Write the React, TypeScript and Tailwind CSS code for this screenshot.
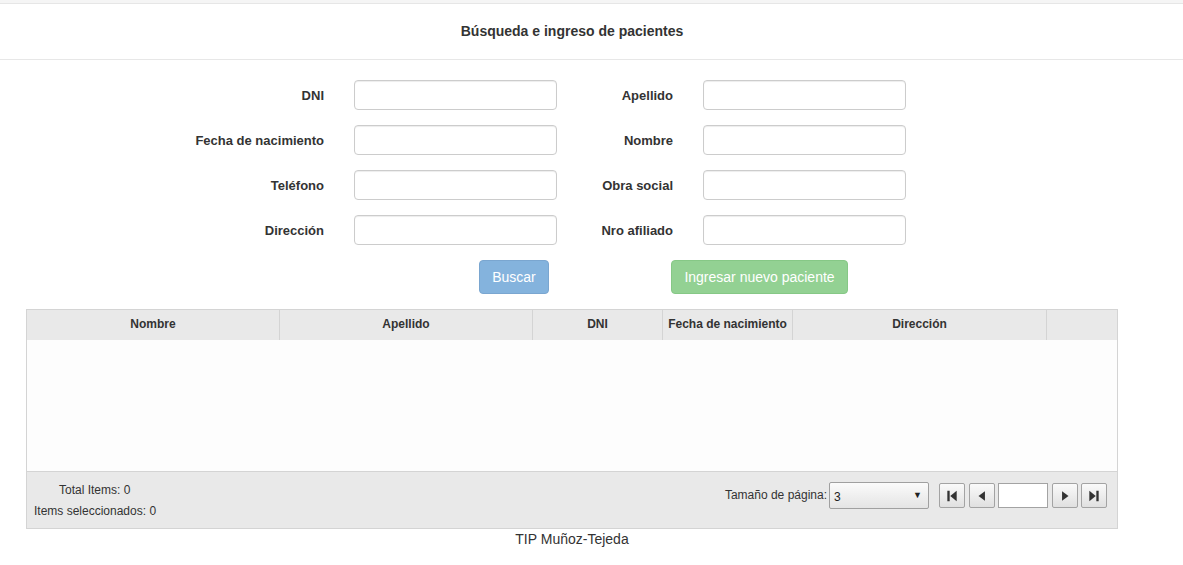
import React from "react";

const font = { fontFamily: '"Liberation Sans", Arial, sans-serif' };

function Field({ label, labelWidth }: { label: string; labelWidth: string }) {
    return (
        <div className="flex items-center">
            <label className={`${labelWidth} mt-[2px] text-right text-[13px] font-bold text-[#333]`}>{label}</label>
            <input
                type="text"
                className="ml-[30px] h-[30px] w-[203px] rounded-[4px] border border-[#ccc] bg-white shadow-[inset_0_1px_1px_rgba(0,0,0,0.075)] outline-none"
            />
        </div>
    );
}

function PagerButton({ children }: { children: React.ReactNode }) {
    return (
        <button className="flex h-[25px] w-[26px] items-center justify-center rounded-[2px] border border-[#a3a3a3] bg-gradient-to-b from-[#fafafa] to-[#e0e0e0] text-[#333]">
            {children}
        </button>
    );
}

const rows: [string, string][] = [
    ["DNI", "Apellido"],
    ["Fecha de nacimiento", "Nombre"],
    ["Teléfono", "Obra social"],
    ["Dirección", "Nro afiliado"],
];

const columns = [
    { name: "Nombre", w: "w-[253px]" },
    { name: "Apellido", w: "w-[253px]" },
    { name: "DNI", w: "w-[130px]" },
    { name: "Fecha de nacimiento", w: "w-[130px]" },
    { name: "Dirección", w: "w-[254px]" },
    { name: "", w: "flex-1" },
];

export default function App() {
    return (
        <div className="min-h-screen bg-white text-[#333]" style={font}>
            {/* top strip */}
            <div className="h-[4px] border-b border-[#e6e6e6] bg-[#f5f5f5]" />

            {/* title bar */}
            <div className="h-[56px] border-b border-[#e7e7e7]">
                <div className="flex h-full w-[1144px] items-center justify-center pb-[1px]">
                    <h1 className="text-[14px] font-bold text-[#333]">Búsqueda e ingreso de pacientes</h1>
                </div>
            </div>

            <div className="w-[1144px]">
                {/* search form */}
                <div className="mt-[20px] flex flex-col gap-[15px] pl-[164px]">
                    {rows.map(([a, b]) => (
                        <div key={a} className="flex">
                            <Field label={a} labelWidth="w-[160px]" />
                            <Field label={b} labelWidth="w-[116px]" />
                        </div>
                    ))}
                </div>

                <div className="mt-[15px] flex h-[34px]">
                    <button className="ml-[479px] h-[34px] w-[70px] rounded-[4px] border border-[#7aa6d0] bg-[#84b3dd] text-[14px] text-white">
                        Buscar
                    </button>
                    <button className="ml-[122px] h-[34px] w-[177px] rounded-[4px] border border-[#86c886] bg-[#93d193] text-[14px] text-white">
                        Ingresar nuevo paciente
                    </button>
                </div>

                {/* grid */}
                <div className="ml-[26px] mt-[15px] w-[1092px] border border-[#d4d4d4]">
                    <div className="flex h-[30px] bg-[#e9e9e9]">
                        {columns.map((c, i) => (
                            <div
                                key={i}
                                className={`${c.w} flex items-center justify-center pb-[2px] text-[12px] font-bold text-[#333] ${i < columns.length - 1 ? "border-r border-[#d4d4d4]" : ""}`}
                            >
                                {c.name}
                            </div>
                        ))}
                    </div>
                    <div className="h-[131px] bg-[#fdfdfd]" />
                    <div className="flex h-[57px] border-t border-[#d4d4d4] bg-[#e9e9e9]">
                        <div className="flex flex-col pl-[7px] pt-[8px] text-[12px] leading-[21px] text-[#333]">
                            <span className="pl-[25px]">Total Items: 0</span>
                            <span>Items seleccionados: 0</span>
                        </div>
                        <div className="ml-auto flex items-start pr-[10px] pt-[10px]">
                            <span className="mt-[4px] text-[12px] text-[#333]">Tamaño de página:</span>
                            <div className="ml-[2px] flex h-[27px] w-[100px] items-center justify-between rounded-[2px] border border-[#a0a0a0] bg-gradient-to-b from-[#fbfbfb] to-[#e4e4e4] pl-[4px] pr-[6px] text-[12px] text-[#222]">
                                <span className="mt-[2px]">3</span>
                                <span className="text-[9px]">▼</span>
                            </div>
                            <div className="ml-[10px] mt-[1px] flex gap-[3.5px]">
                                <PagerButton>
                                    <svg width="14" height="14" viewBox="0 0 12 12" fill="#333">
                                        <rect x="2" y="1.5" width="2" height="9" />
                                        <polygon points="10,1.5 10,10.5 4.5,6" />
                                    </svg>
                                </PagerButton>
                                <PagerButton>
                                    <svg width="14" height="14" viewBox="0 0 12 12" fill="#333">
                                        <polygon points="8.5,2 8.5,10 3,6" />
                                    </svg>
                                </PagerButton>
                                <input
                                    type="text"
                                    className="h-[25px] w-[50px] border border-[#a3a3a3] bg-white outline-none"
                                />
                                <PagerButton>
                                    <svg width="14" height="14" viewBox="0 0 12 12" fill="#333">
                                        <polygon points="3.5,2 3.5,10 9,6" />
                                    </svg>
                                </PagerButton>
                                <PagerButton>
                                    <svg width="14" height="14" viewBox="0 0 12 12" fill="#333">
                                        <polygon points="2,1.5 2,10.5 7.5,6" />
                                        <rect x="8" y="1.5" width="2" height="9" />
                                    </svg>
                                </PagerButton>
                            </div>
                        </div>
                    </div>
                </div>

                <p className="text-center text-[14px] leading-[20px] text-[#333]">TIP Muñoz-Tejeda</p>
            </div>
        </div>
    );
}
